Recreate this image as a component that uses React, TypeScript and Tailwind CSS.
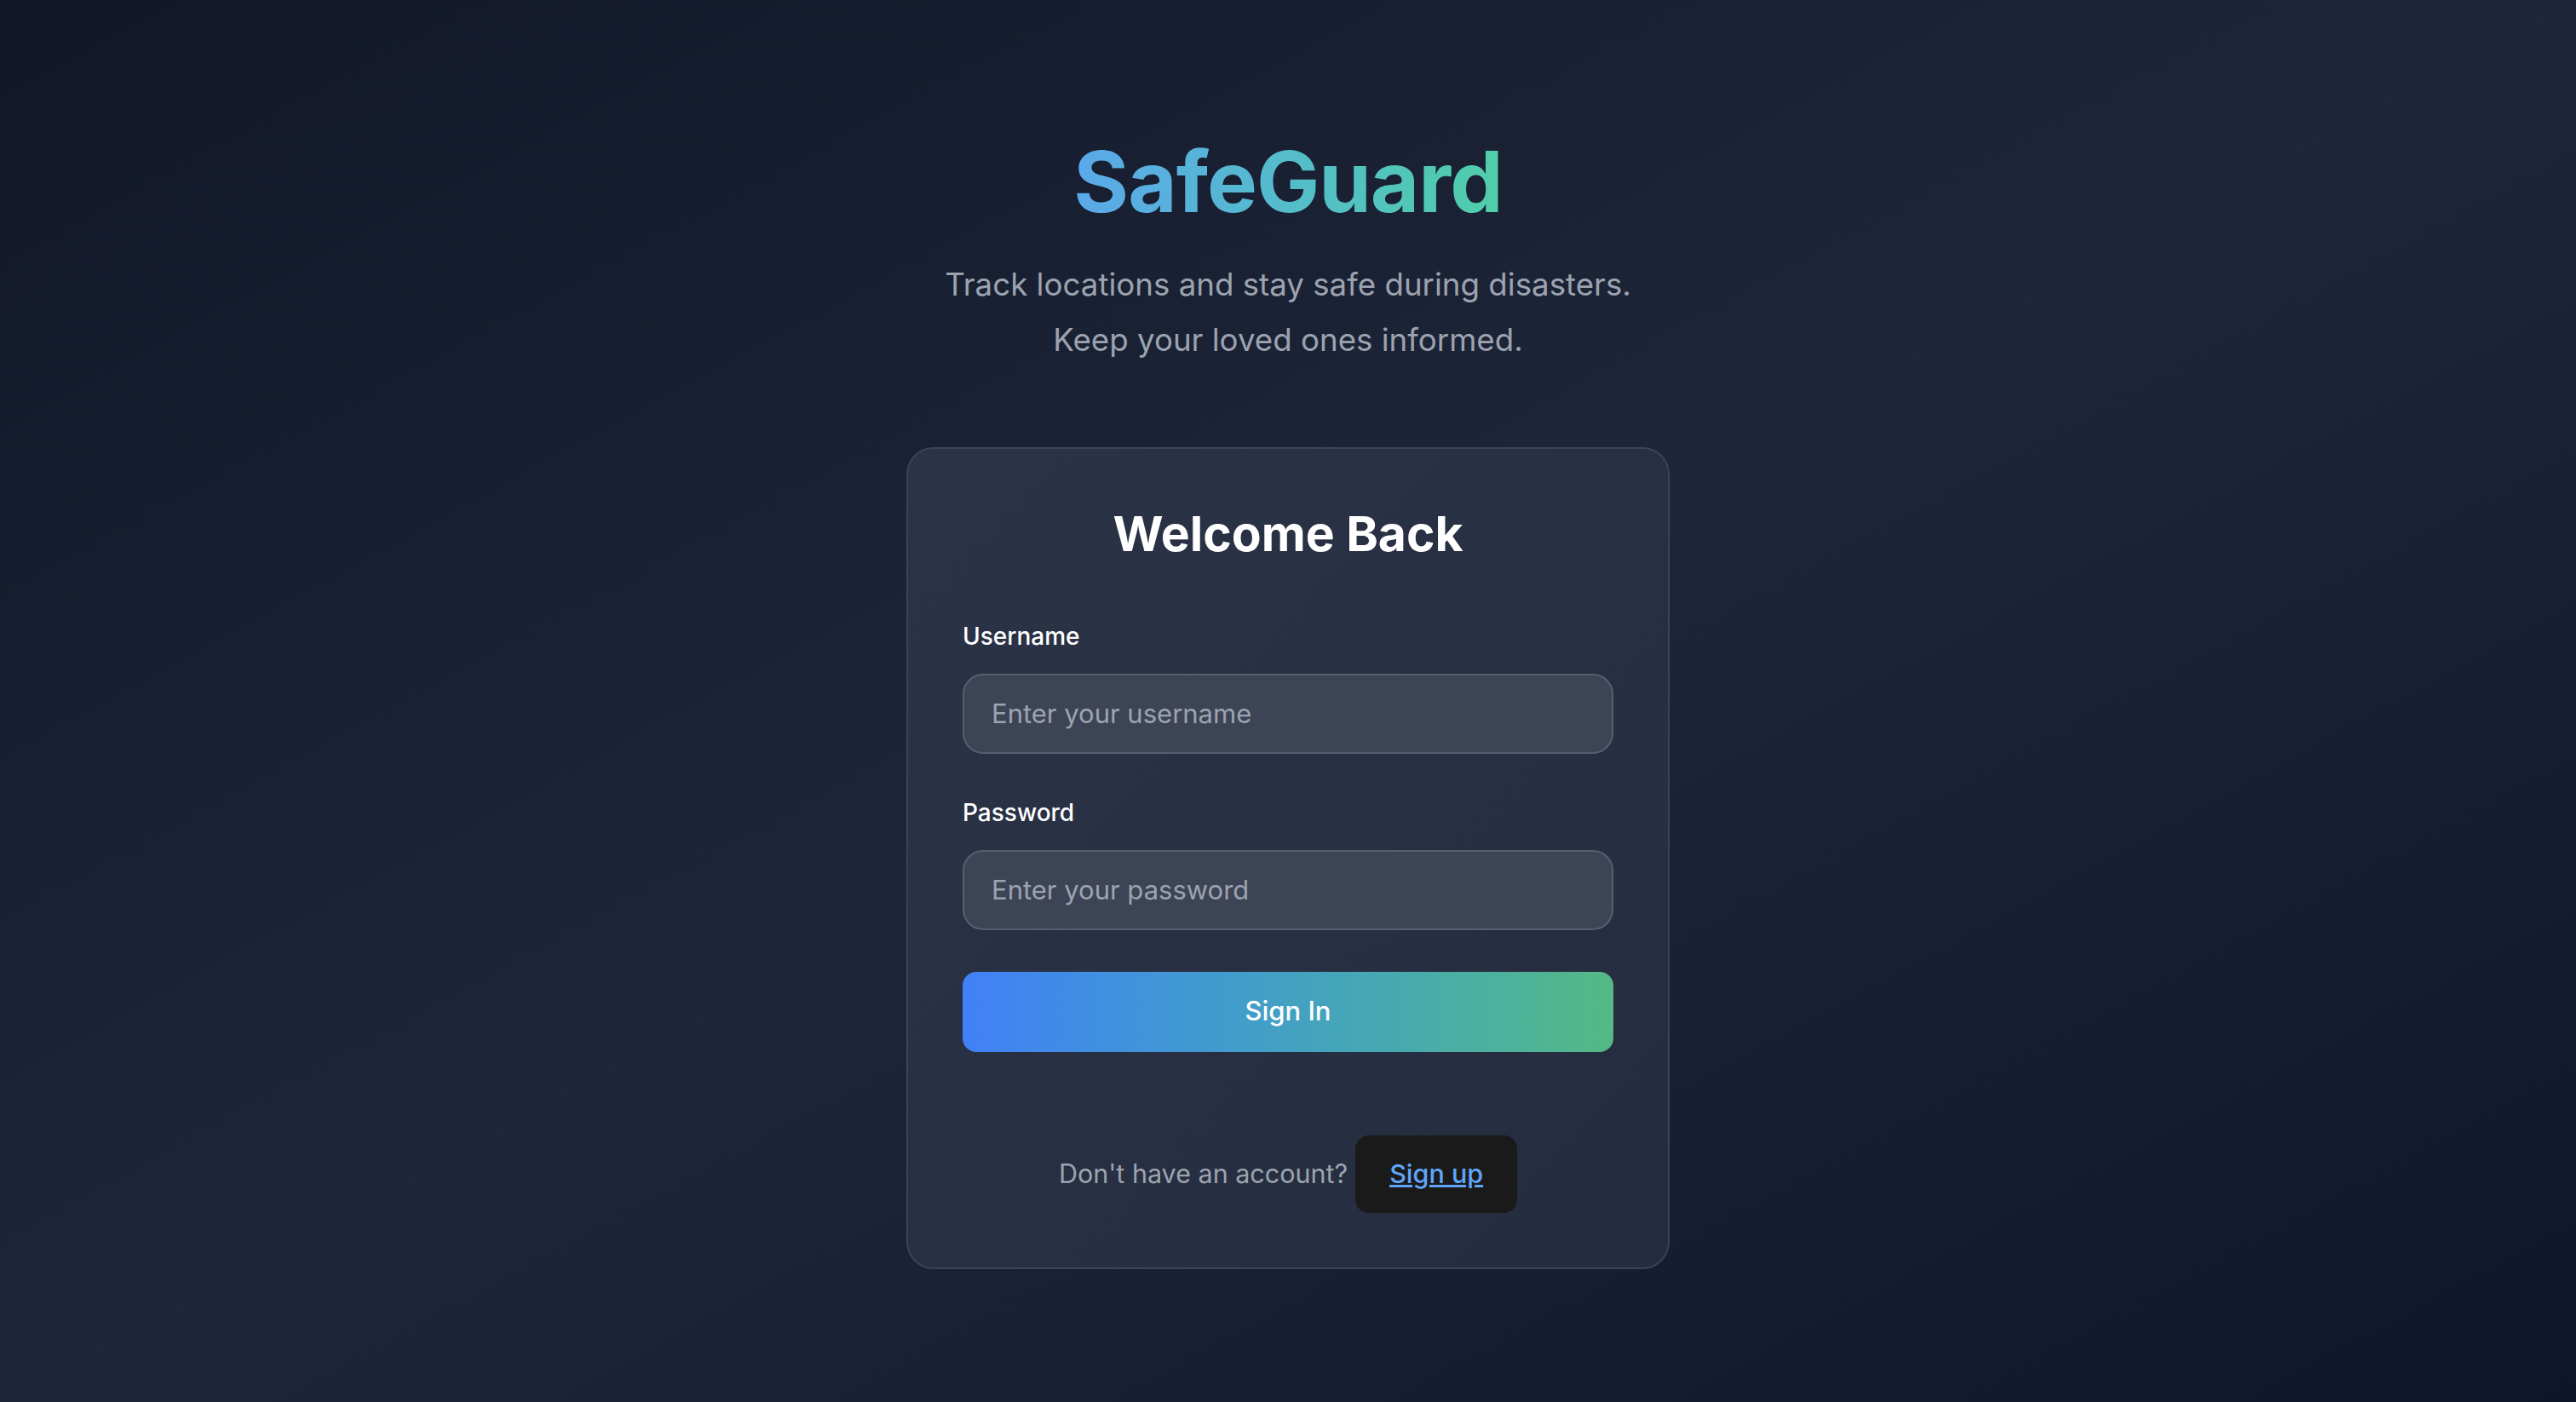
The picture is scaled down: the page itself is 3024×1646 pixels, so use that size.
export default function App() {
  return (
    <div className="flex min-h-screen flex-col items-center justify-center bg-gradient-to-br from-[#111729] via-[#1e2639] to-[#10162a] pt-[6px] font-['Inter',sans-serif]">
      <h1 className="inline-block bg-gradient-to-r from-[#5ba8ea] to-[#50cea8] bg-clip-text text-[99px] font-bold leading-[100px] tracking-[-1px] text-transparent">
        SafeGuard
      </h1>
      <p className="mt-[38px] text-center text-[36.7px] leading-[65px] text-[#9ca3af]">
        Track locations and stay safe during disasters.
        <br />
        Keep your loved ones informed.
      </p>

      <div className="mt-[94px] w-[896px] rounded-[32px] border-2 border-[#3b4356] bg-gradient-to-br from-[#2b3347] to-[#252c3f] p-16">
        <h2 className="mb-16 text-center text-[57px] font-bold leading-[72px] text-white">
          Welcome Back
        </h2>
        <form className="flex flex-col" onSubmit={(e) => e.preventDefault()}>
          <label className="mb-6 text-[28px] font-medium leading-[40px] text-white" htmlFor="username">
            Username
          </label>
          <input
            id="username"
            className="mb-[49px] h-[94px] w-full rounded-[24px] border-2 border-[#575e70] bg-[#3d4455] px-8 text-[31px] text-white outline-none placeholder:text-[#9ca3af]"
            placeholder="Enter your username"
            type="text"
          />
          <label className="mb-6 text-[28px] font-medium leading-[40px] text-white" htmlFor="password">
            Password
          </label>
          <input
            id="password"
            className="h-[94px] w-full rounded-[24px] border-2 border-[#575e70] bg-[#3d4455] px-8 text-[31px] text-white outline-none placeholder:text-[#9ca3af]"
            placeholder="Enter your password"
            type="password"
          />
          <button
            className="mt-[49px] h-[94px] w-full rounded-[16px] bg-gradient-to-r from-[#4280f6] to-[#54b985] text-[31px] font-medium text-white"
            type="submit"
          >
            Sign In
          </button>
        </form>
        <div className="mt-[98px] flex items-center justify-center gap-[9px]">
          <span className="text-[30.5px] text-[#9ca3af]">Don't have an account?</span>
          <button
            className="h-[91px] rounded-[16px] bg-[#1a1a1a] px-[40px] text-[30.5px] font-medium text-[#60a5fa] underline"
            type="button"
          >
            Sign up
          </button>
        </div>
      </div>
    </div>
  );
}
